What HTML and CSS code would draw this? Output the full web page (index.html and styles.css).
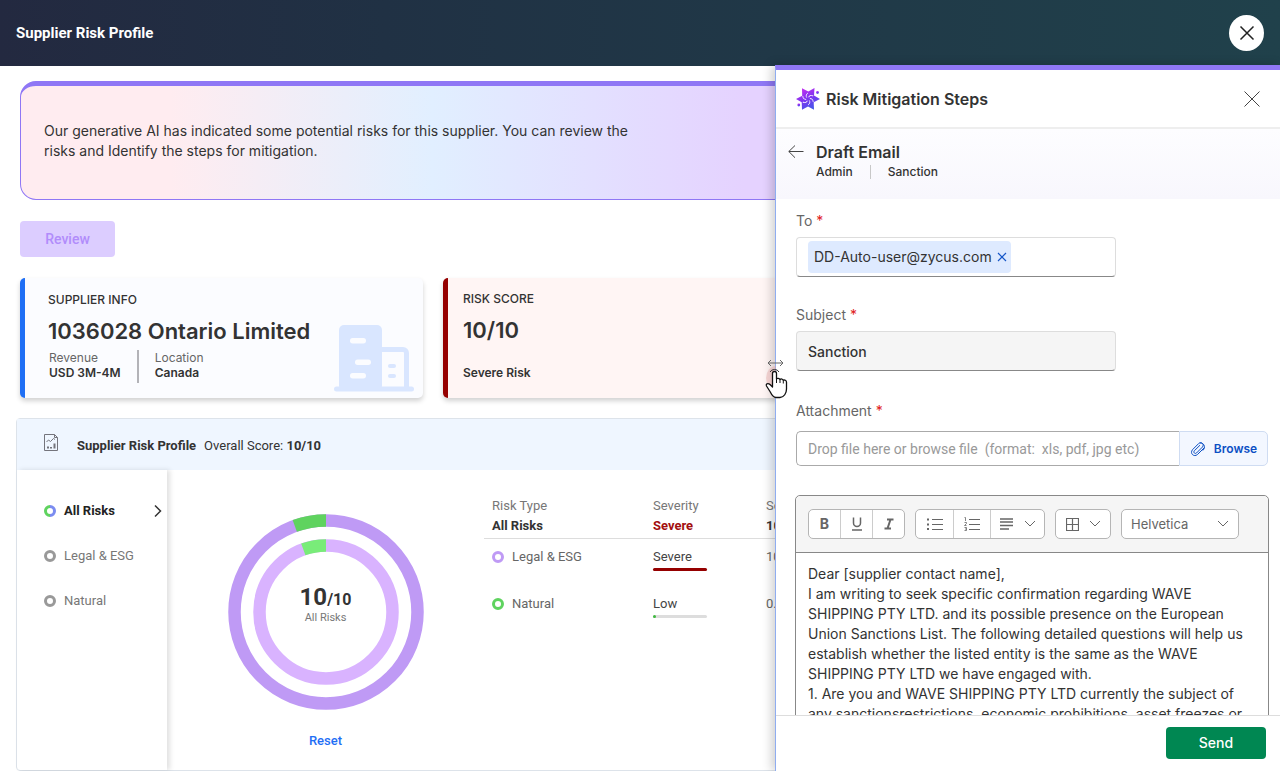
FILE: index.html
```html
<!DOCTYPE html>
<html lang="en">

<head>
    <meta charset="UTF-8">
    <meta name="viewport" content="width=device-width, initial-scale=1.0">
    <title>Supplier Risk Profile</title>
    <link rel="stylesheet" href="styles.css">
</head>

<body>
    <header class="topbar">
        <h1>Supplier Risk Profile</h1>
        <button type="button" class="topbar-close" aria-label="Close page">
            <svg width="16" height="16" viewBox="0 0 16 16"><path d="M1.5 1.5l13 13M14.5 1.5l-13 13" /></svg>
        </button>
    </header>

    <main class="page">
        <section class="banner">
            <p>Our generative AI has indicated some potential risks for this supplier. You can review the<br>
            risks and Identify the steps for mitigation.</p>
        </section>

        <button type="button" class="review-btn" disabled>Review</button>

        <div class="cards">
            <section class="card card-info">
                <div>
                    <h2>SUPPLIER INFO</h2>
                    <p class="card-value">1036028 Ontario Limited</p>
                    <dl class="facts">
                        <div>
                            <dt>Revenue</dt>
                            <dd>USD 3M-4M</dd>
                        </div>
                        <div>
                            <dt>Location</dt>
                            <dd>Canada</dd>
                        </div>
                    </dl>
                </div>
                <svg class="building" width="80" height="68" viewBox="0 0 80 68">
                    <rect x="5" y="1" width="43" height="66" rx="5" fill="#d9e6ff" />
                    <path d="M46 25.5h23a3.500 3.500 0 0 1 3.500 3.500v35" fill="none" stroke="#d9e6ff" stroke-width="5" />
                    <rect x="0" y="62.500" width="80" height="5" rx="2.500" fill="#d9e6ff" />
                    <rect x="16" y="14" width="16" height="5.500" rx="2.700" fill="#fbfcff" />
                    <rect x="21" y="35.500" width="16" height="5.500" rx="2.700" fill="#fbfcff" />
                    <rect x="16" y="49" width="16" height="5.500" rx="2.700" fill="#fbfcff" />
                    <rect x="54" y="40" width="8" height="4" rx="2" fill="#d9e6ff" />
                    <rect x="54" y="50" width="8" height="4" rx="2" fill="#d9e6ff" />
                </svg>
            </section>
            <section class="card card-score">
                <div>
                    <h2>RISK SCORE</h2>
                    <p class="card-value">10/10</p>
                    <p class="card-note">Severe Risk</p>
                </div>
            </section>
        </div>

        <section class="profile">
            <div class="profile-head">
                <svg class="report-icon" width="16" height="18" viewBox="0 0 16 18">
                    <path d="M1.500 .5h10l3 3v13h-13zM11.500 .5v3h3" />
                    <path d="M3.500 8l2-2 2 1.500 3-3 1.500 1" />
                    <path d="M5 14.500v-2M8 14.500v-1.500M11.500 14.500v-5" stroke-width="2" />
                </svg>
                <h2>Supplier Risk Profile</h2>
                <p>Overall Score: <b>10/10</b></p>
            </div>
            <div class="profile-body">
                <nav class="risk-nav">
                    <a href="#all" class="active">
                        <svg width="12" height="12" viewBox="0 0 12 12">
                            <path d="M6 1.500a4.500 4.500 0 0 0 0 9" fill="none" stroke="#5fd35f" stroke-width="3" />
                            <path d="M6 1.500a4.500 4.500 0 0 1 0 9" fill="none" stroke="#7b8cf0" stroke-width="3" />
                        </svg>
                        <span>All Risks</span>
                        <svg class="chevron" width="8" height="14" viewBox="0 0 8 14"><path d="M1 1.500l5.500 5.500L1 12.500" /></svg>
                    </a>
                    <a href="#legal"><i class="ring"></i><span>Legal &amp; ESG</span></a>
                    <a href="#natural"><i class="ring"></i><span>Natural</span></a>
                </nav>

                <div class="chart">
                    <div class="donut">
                        <svg width="196" height="196" viewBox="0 0 196 196">
                            <g fill="none" transform="rotate(-90 98 98)">
                                <circle cx="98" cy="98" r="91.500" stroke="#bf9af5" stroke-width="12.500" />
                                <circle cx="98" cy="98" r="91.500" stroke="#5fd35f" stroke-width="12.500" pathLength="360" stroke-dasharray="20 340" stroke-dashoffset="20" />
                                <circle cx="98" cy="98" r="66.500" stroke="#d9b3ff" stroke-width="12.500" />
                                <circle cx="98" cy="98" r="66.500" stroke="#79ec79" stroke-width="12.500" pathLength="360" stroke-dasharray="20 340" stroke-dashoffset="20" />
                            </g>
                        </svg>
                        <div class="donut-label">
                            <p class="donut-score">10<small>/10</small></p>
                            <p>All Risks</p>
                        </div>
                    </div>
                    <button type="button" class="reset-btn">Reset</button>
                </div>

                <table class="risk-table">
                    <thead>
                        <tr>
                            <th>Risk Type</th>
                            <th>Severity</th>
                            <th>Score</th>
                        </tr>
                        <tr class="total">
                            <td>All Risks</td>
                            <td class="severe">Severe</td>
                            <td>10</td>
                        </tr>
                    </thead>
                    <tbody>
                        <tr>
                            <td><i class="ring ring-purple"></i>Legal &amp; ESG</td>
                            <td class="level">Severe<div class="bar"><div class="bar-fill bar-red" style="width: 100%"></div></div></td>
                            <td>10</td>
                        </tr>
                        <tr>
                            <td><i class="ring ring-green"></i>Natural</td>
                            <td class="level">Low<div class="bar"><div class="bar-fill bar-green" style="width: 5%"></div></div></td>
                            <td>0.5</td>
                        </tr>
                    </tbody>
                </table>
            </div>
        </section>
    </main>

    <aside class="drawer">
        <div class="drag-handle">
            <svg width="24" height="42" viewBox="0 0 24 42">
                <path d="M12 9a10 12 0 0 0 0 24z" fill="#e2a0a0" opacity=".4" />
                <path d="M4 6h15M7 3L4 6l3 3M16 3l3 3-3 3" fill="none" stroke="#666" />
                <path d="M6 15a5 4.500 0 0 1 9 0" fill="none" stroke="#333" />
                <path d="M8.500 27V16.500a2 2 0 0 1 4 0V22c.5-1 3-1 3.500 .5 1-1 3-.5 3.300 .8 1.200-.7 3.200 0 3.200 2V32c0 4-2.500 8.500-6.500 8.500H12c-2.500 0-4.500-3-6-6L2.500 29c-.8-1.500 .5-3 2.500-2.200 1.300.500 2.500 2 3.500 3.200z" fill="#fff" stroke="#111" stroke-width="1.300" stroke-linejoin="round" />
                <path d="M12.500 22v4M16 22.500v3.500M19.300 23.500v3" fill="none" stroke="#111" />
            </svg>
        </div>

        <div class="drawer-head">
            <svg class="logo" width="24" height="24" viewBox="0 0 24 24">
                <defs>
                    <linearGradient id="star" x1=".2" y1="0" x2=".7" y2="1">
                        <stop offset="0" stop-color="#c92df0" />
                        <stop offset=".5" stop-color="#7d35f0" />
                        <stop offset="1" stop-color="#3f5ce8" />
                    </linearGradient>
                    <path id="swirl" d="M12 6c-1.800 1-2.300 2.800-1.300 4.600" />
                </defs>
                <g fill="url(#star)">
                    <path d="M6 1.200l6.300 3.300L18.500 1l-.5 7.500 6 3.500-6.300 3.200 .3 7.600-6-3.300-6 3.300-.3-7.600L0 12l6.200-3.300z" />
                    <circle cx="21.500" cy="5.500" r="1.400" />
                    <circle cx="2.800" cy="18" r="1.400" />
                </g>
                <g fill="none" stroke="#f1e6ff" stroke-width=".9">
                    <use href="#swirl" />
                    <use href="#swirl" transform="rotate(60 12 12)" />
                    <use href="#swirl" transform="rotate(120 12 12)" />
                    <use href="#swirl" transform="rotate(180 12 12)" />
                    <use href="#swirl" transform="rotate(240 12 12)" />
                    <use href="#swirl" transform="rotate(300 12 12)" />
                </g>
            </svg>
            <h2>Risk Mitigation Steps</h2>
            <button type="button" class="icon-btn" aria-label="Close panel">
                <svg width="18" height="18" viewBox="0 0 18 18"><path d="M1.500 1.500l15 15M16.500 1.500l-15 15" /></svg>
            </button>
        </div>

        <div class="drawer-sub">
            <button type="button" class="icon-btn" aria-label="Back">
                <svg width="16" height="14" viewBox="0 0 16 14"><path d="M15.500 6.500H.8M7 .5L.8 6.500 7 12.700" /></svg>
            </button>
            <div>
                <h3>Draft Email</h3>
                <ul>
                    <li>Admin</li>
                    <li>Sanction</li>
                </ul>
            </div>
        </div>

        <form class="drawer-form" id="emailForm">
            <div class="form-field">
                <label for="to">To <span class="req">*</span></label>
                <div class="tag-input">
                    <span class="tag">DD-Auto-user@zycus.com
                        <button type="button" aria-label="Remove recipient">
                            <svg width="10" height="10" viewBox="0 0 10 10"><path d="M1 1l8 8M9 1L1 9" /></svg>
                        </button>
                    </span>
                    <input type="text" id="to">
                </div>
            </div>

            <div class="form-field">
                <label for="subject">Subject <span class="req">*</span></label>
                <input type="text" id="subject" class="subject" value="Sanction" readonly>
            </div>

            <div class="form-field">
                <label for="attachment">Attachment <span class="req">*</span></label>
                <div class="file-row">
                    <input type="text" id="attachment" placeholder="Drop file here or browse file&nbsp; (format:&nbsp; xls, pdf, jpg etc)">
                    <button type="button">
                        <svg width="16" height="16" viewBox="0 0 16 16"><path d="M14.500 6.500l-7 7c-3.500 3-8-1-5-4.800l6.200-6.200c2.500-2.300 6 .8 3.800 3.500l-6 6c-1.500 1.300-3.500-.5-2.200-2.200l5.700-5.600M12.800 9.500c3.500-3.500 1-8-3-7.500" /></svg>
                        Browse
                    </button>
                </div>
            </div>

            <div class="editor">
                <div class="toolbar">
                    <div class="tool-group">
                        <button type="button" aria-label="Bold"><b>B</b></button>
                        <button type="button" aria-label="Underline">
                            <svg width="12" height="14" viewBox="0 0 12 14"><path d="M2.500 .5v5.500a3.500 3.500 0 0 0 7 0V.5M1 13h10" stroke-width="1.500" /></svg>
                        </button>
                        <button type="button" aria-label="Italic">
                            <svg width="10" height="12" viewBox="0 0 10 12"><path d="M3 1.500h6.500M.5 10.500H7M6.500 1.500l-3 9" stroke-width="2" /></svg>
                        </button>
                    </div>
                    <div class="tool-group">
                        <button type="button" class="tool-wide" aria-label="Bulleted list">
                            <svg width="16" height="12" viewBox="0 0 16 12"><path d="M5 1.500h11M5 6.500h11M5 11.500h11" /><path d="M0 1.500h2M0 6.500h2M0 11h2" stroke-width="2" /></svg>
                        </button>
                        <button type="button" class="tool-wide" aria-label="Numbered list">
                            <svg width="16" height="14" viewBox="0 0 16 14"><path d="M5 2.500h11M5 7.500h11M5 12.500h11" /><path d="M.5 .5h1V4M.5 5.500h2v1L.5 8.500h2M.5 10.500h2v3h-2M1 12h1.500" stroke-width=".8" /></svg>
                        </button>
                        <button type="button" class="tool-menu" aria-label="Alignment">
                            <svg width="14" height="12" viewBox="0 0 14 12"><path d="M0 1h13M0 4h13M0 7.500h13M0 11h9" stroke-width="1.500" /></svg>
                            <svg width="12" height="8" viewBox="0 0 12 8"><path d="M1 1l5 5 5-5" /></svg>
                        </button>
                    </div>
                    <div class="tool-group">
                        <button type="button" class="tool-menu" aria-label="Table">
                            <svg width="13" height="13" viewBox="0 0 13 13"><path d="M.5 .5h12v12H.5zM6.500 .5v12M.5 6.500h12" stroke-width="1.200" /></svg>
                            <svg width="12" height="8" viewBox="0 0 12 8"><path d="M1 1l5 5 5-5" /></svg>
                        </button>
                    </div>
                    <div class="tool-group font-pick">
                        <select aria-label="Font">
                            <option>Helvetica</option>
                        </select>
                        <svg width="12" height="8" viewBox="0 0 12 8"><path d="M1 1l5 5 5-5" /></svg>
                    </div>
                </div>
                <textarea aria-label="Message" rows="10">Dear [supplier contact name],
I am writing to seek specific confirmation regarding WAVE
SHIPPING PTY LTD. and its possible presence on the European
Union Sanctions List. The following detailed questions will help us
establish whether the listed entity is the same as the WAVE
SHIPPING PTY LTD we have engaged with.
1. Are you and WAVE SHIPPING PTY LTD currently the subject of
any sanctionsrestrictions, economic prohibitions, asset freezes or</textarea>
            </div>
        </form>

        <div class="drawer-foot">
            <button type="submit" form="emailForm">Send</button>
        </div>
    </aside>
</body>

</html>
```
FILE: styles.css
```css
* {
    box-sizing: border-box;
}

body {
    margin: 0;
    height: 100vh;
    overflow: hidden;
    position: relative;
    font-family: Inter, sans-serif;
    font-size: 14px;
    line-height: 20px;
    color: #333333;
    background-color: #ffffff;
}

h1, h2, h3, p, dl, dd, ul {
    margin: 0;
    padding: 0;
}

button, input, select, textarea {
    font: inherit;
    color: inherit;
    margin: 0;
}

button {
    display: flex;
    align-items: center;
    justify-content: center;
    padding: 0;
    border: none;
    background: none;
    cursor: pointer;
}

svg {
    display: block;
    flex: none;
}

/* top bar */
.topbar {
    display: flex;
    align-items: center;
    justify-content: space-between;
    height: 66px;
    padding: 0 16px;
    background: linear-gradient(90deg, #232940, #203144 30%, #20414b);
}

.topbar h1 {
    font-family: Roboto, sans-serif;
    font-size: 15px;
    font-weight: 700;
    color: #ffffff;
}

.topbar-close {
    width: 35px;
    height: 36px;
    border-radius: 50%;
    background-color: #ffffff;
}

.topbar-close path {
    stroke: #222222;
    stroke-width: 1.5;
}

/* page */
.page {
    padding: 15px 11px 0 16px;
}

.banner {
    height: 119px;
    margin-left: 4px;
    padding: 35px 23px;
    border: 1px solid #8f77f5;
    border-top-width: 5px;
    border-radius: 16px;
    background: linear-gradient(90deg, #ffecf0 12%, #e1efff 33%, #e5d2ff 58%);
}

.review-btn {
    width: 95px;
    height: 36px;
    margin: 21px 0 21px 4px;
    border-radius: 4px;
    background-color: #dccdff;
    color: #b18cfb;
    font-family: Roboto, sans-serif;
    font-weight: 500;
}

.cards {
    display: grid;
    grid-template-columns: repeat(3, 1fr);
    gap: 20px;
    margin-left: 4px;
}

.card {
    display: flex;
    justify-content: space-between;
    height: 120px;
    padding: 12px 9px 0 23px;
    border-left: 5px solid #1f6ff5;
    border-radius: 5px;
    background-color: #fbfcff;
    box-shadow: 0 3px 5px rgba(0, 0, 0, 0.18);
}

.card h2 {
    font-size: 12px;
    font-weight: 500;
}

.card-value {
    font-size: 22px;
    line-height: 28px;
    font-weight: 600;
    margin-top: 7px;
}

.card-score {
    padding-top: 11px;
    padding-left: 15px;
    border-left-color: #950000;
    background-color: #fff5f4;
}

.card-note {
    margin-top: 19px;
    font-size: 12px;
    font-weight: 600;
}

.facts {
    display: flex;
    font-size: 12px;
    line-height: 15px;
    margin: 5px 0 0 1px;
}

.facts > div {
    padding: 0 16px 3px 0;
}

.facts > div + div {
    padding-left: 16px;
    border-left: 2px solid #b3b3b8;
}

.facts dt {
    color: #666666;
}

.facts dd {
    font-weight: 600;
}

.building {
    align-self: flex-end;
    margin-bottom: 6px;
}

/* risk profile */
.profile {
    margin-top: 20px;
    border: 1px solid #dde3ea;
    border-radius: 4px;
    font-family: Roboto, sans-serif;
    font-size: 13px;
}

.profile-head {
    display: flex;
    align-items: center;
    height: 51px;
    padding: 3px 26px 0;
    background-color: #eff6ff;
}

.profile-head h2 {
    margin: 0 8px 0 18px;
    font-size: 13px;
    font-weight: 700;
}

.report-icon {
    align-self: flex-start;
    margin-top: 12px;
}

.report-icon path {
    fill: none;
    stroke: #74747c;
}

.profile-body {
    display: flex;
    height: 300px;
}

.risk-nav {
    display: flex;
    flex-direction: column;
    gap: 25px;
    width: 150px;
    padding: 31px 5px 0 27px;
    box-shadow: 3px 0 5px rgba(0, 0, 0, 0.12);
}

.risk-nav a {
    display: flex;
    align-items: center;
    gap: 8px;
    color: #777777;
    text-decoration: none;
}

.risk-nav .active {
    color: #222222;
    font-weight: 700;
}

.chevron {
    margin-left: auto;
}

.chevron path {
    fill: none;
    stroke: #333333;
    stroke-width: 1.5;
}

.ring {
    display: inline-block;
    flex: none;
    width: 12px;
    height: 12px;
    border: 3px solid #999999;
    border-radius: 50%;
}

.ring-purple {
    border-color: #bf9af5;
}

.ring-green {
    border-color: #5fd35f;
}

.chart {
    display: flex;
    flex-direction: column;
    align-items: center;
    gap: 21px;
    width: 317px;
    padding-top: 44px;
}

.donut {
    display: grid;
    place-items: center;
}

.donut > * {
    grid-area: 1 / 1;
}

.donut-label {
    text-align: center;
    font-size: 11px;
    line-height: 12px;
    color: #777777;
    padding-bottom: 16px;
}

.donut-score {
    font-size: 24px;
    line-height: 24px;
    font-weight: 700;
    color: #333333;
}

.donut-score small {
    font-size: 16px;
}

.reset-btn {
    color: #1f6ff5;
    font-weight: 500;
}

.risk-table {
    flex: 1;
    align-self: flex-start;
    width: 100%;
    margin-top: 26px;
    border-collapse: collapse;
    table-layout: fixed;
}

.risk-table th,
.risk-table td {
    height: 20px;
    padding: 0 8px;
    text-align: left;
    font-weight: 400;
    vertical-align: top;
}

.risk-table th:first-child {
    width: 161px;
}

.risk-table th:nth-child(2) {
    width: 113px;
}

.risk-table th {
    color: #777777;
}

.risk-table .total td {
    height: 22px;
    font-weight: 700;
    border-bottom: 1px solid #dddddd;
}

.risk-table .total .severe {
    color: #a30f0f;
}

.risk-table tbody td {
    height: 48px;
    padding-top: 8px;
    color: #666666;
}

.risk-table tbody .level {
    color: #444444;
}

.risk-table .ring {
    margin-right: 8px;
    vertical-align: -2px;
}

.bar {
    width: 54px;
    height: 3px;
    margin-top: 1px;
    background-color: #dddddd;
    border-radius: 2px;
}

.bar-fill {
    height: 3px;
    border-radius: 2px;
}

.bar-red {
    background-color: #950000;
}

.bar-green {
    background-color: #3fb93f;
}

/* side drawer, over the page */
.drawer {
    position: absolute;
    top: 65px;
    right: 0;
    bottom: 0;
    width: 505px;
    display: flex;
    flex-direction: column;
    background-color: #ffffff;
    border-top: 5px solid #8f77f5;
    border-left: 1px solid #8fadf0;
    box-shadow: -3px 0 10px rgba(0, 0, 0, 0.2);
}

.drag-handle {
    position: absolute;
    left: -12px;
    top: 287px;
    cursor: ew-resize;
}

.drawer-head {
    display: flex;
    align-items: center;
    gap: 6px;
    height: 59px;
    padding: 0 19px 0 20px;
    border-bottom: 2px solid #eeeeee;
}

.drawer-head h2,
.drawer-sub h3 {
    font-size: 16px;
    font-weight: 600;
}

.drawer-head .icon-btn {
    margin-left: auto;
}

.icon-btn path {
    fill: none;
    stroke: #444444;
}

.drawer-sub {
    display: flex;
    align-items: flex-start;
    gap: 12px;
    height: 70px;
    padding: 13px 12px;
    background: linear-gradient(#fdfdff, #f8f7fd);
}

.drawer-sub .icon-btn {
    height: 20px;
}

.drawer-sub ul {
    display: flex;
    list-style: none;
    font-size: 12px;
    font-weight: 500;
}

.drawer-sub li + li {
    margin: 3px 0 3px 17px;
    padding-left: 17px;
    line-height: 14px;
    border-left: 1px solid #c8c8c8;
}

.drawer-form {
    flex: 1;
    min-height: 0;
    overflow: hidden;
    padding: 12px 12px 0 20px;
}

.form-field {
    margin-bottom: 28px;
}

.form-field label {
    display: block;
    margin-bottom: 6px;
    color: #666666;
}

.req {
    color: #e02020;
}

.tag-input,
.subject {
    display: flex;
    align-items: center;
    width: 320px;
    height: 40px;
    padding: 0 11px;
    border: 1px solid #dddddd;
    border-bottom-color: #888888;
    border-radius: 4px;
}

.tag {
    display: flex;
    align-items: center;
    gap: 5px;
    height: 32px;
    padding: 0 4px 0 6px;
    border-radius: 4px;
    background-color: #deeaff;
}

.tag path {
    stroke: #1757c8;
    stroke-width: 1.2;
}

.tag-input input {
    flex: 1;
    min-width: 0;
    border: none;
    outline: none;
}

.form-field .subject {
    background-color: #f5f5f5;
    font-weight: 500;
}

.form-field:nth-child(2) {
    margin-bottom: 30px;
}

.form-field:nth-child(3) {
    margin-bottom: 29px;
}

.form-field:nth-child(3) label {
    margin-bottom: 10px;
}

.file-row {
    display: flex;
    height: 35px;
}

.file-row input {
    flex: 1;
    padding: 0 11px;
    border: 1px solid #aaaaaa;
    border-right: none;
    border-radius: 5px 0 0 5px;
    font-family: Roboto, sans-serif;
}

.file-row input::placeholder {
    color: #999999;
}

.file-row button {
    gap: 8px;
    width: 89px;
    border: 1px solid #cfdcf2;
    border-radius: 0 5px 5px 0;
    background-color: #f3f7ff;
    color: #0b4fc4;
    font-size: 12px;
    font-weight: 600;
}

.file-row path {
    fill: none;
    stroke: #0b4fc4;
}

.editor {
    margin: 0 -1px;
    border: 1px solid #888888;
    border-radius: 5px;
}

.toolbar {
    display: flex;
    align-items: center;
    gap: 10px;
    height: 57px;
    padding: 0 12px;
    border-bottom: 1px solid #888888;
    border-radius: 5px 5px 0 0;
    background-color: #f5f5f5;
}

.tool-group {
    display: flex;
    align-items: center;
    height: 30px;
    border: 1px solid #b5b5b5;
    border-radius: 5px;
    background-color: #ffffff;
}

.tool-group button {
    width: 32px;
    height: 28px;
    color: #666666;
}

.tool-group button + button {
    border-left: 1px solid #cccccc;
}

.tool-group button:first-child {
    width: 31px;
}

.tool-group .tool-wide,
.tool-group .tool-wide:first-child {
    width: 37px;
}

.tool-group .tool-menu,
.tool-group .tool-menu:first-child {
    gap: 10px;
    width: 54px;
}

.tool-group path {
    fill: none;
    stroke: #666666;
}

.font-pick {
    width: 118px;
    padding: 0 9px;
}

.font-pick select {
    flex: 1;
    min-width: 0;
    padding: 0;
    border: none;
    appearance: none;
    background: none;
    color: #666666;
    font-size: 13px;
}

.editor textarea {
    display: block;
    width: 100%;
    padding: 11px 12px;
    border: none;
    outline: none;
    resize: none;
    overflow: hidden;
    background: none;
}

.drawer-foot {
    display: flex;
    justify-content: flex-end;
    align-items: flex-start;
    height: 56px;
    padding: 11px 14px;
    border-top: 1px solid #dddddd;
}

.drawer-foot button {
    width: 100px;
    height: 32px;
    border-radius: 4px;
    background-color: #008752;
    color: #ffffff;
    font-weight: 500;
}
```
